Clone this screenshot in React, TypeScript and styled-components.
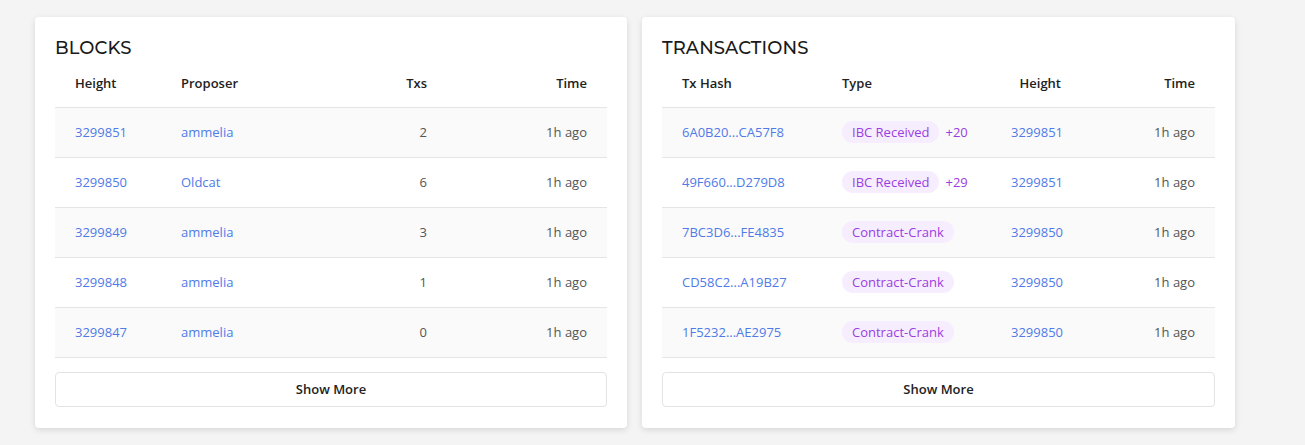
import React from 'react';
import styled, { createGlobalStyle } from 'styled-components';

const GlobalStyle = createGlobalStyle`
  body {
    margin: 0;
    background: #f4f4f4;
    font-family: 'Open Sans', 'Noto Sans', sans-serif;
    color: #222;
  }
`;

const Page = styled.div`
  display: flex;
  gap: 15px;
  padding: 17px 35px;
  align-items: flex-start;
`;

const Card = styled.section<{ $w: number }>`
  width: ${(p) => p.$w}px;
  box-sizing: border-box;
  background: #fff;
  border-radius: 4px;
  box-shadow: 0 2px 6px rgba(0, 0, 0, 0.12);
  padding: 20px 20px 21px;
`;

const Title = styled.h2`
  margin: 0;
  font-family: 'Montserrat', 'Lato', 'Noto Sans', sans-serif;
  font-weight: 500;
  font-size: 18px;
  line-height: 22px;
  letter-spacing: 0.1px;
  color: #1a1a1a;
`;

const Table = styled.table`
  width: 100%;
  border-collapse: collapse;
  table-layout: fixed;
  font-size: 13px;
`;

const Th = styled.th<{ $align?: 'left' | 'right'; $w: number }>`
  width: ${(p) => p.$w}px;
  height: 48px;
  padding: 0 20px;
  text-align: ${(p) => p.$align ?? 'left'};
  font-weight: 600;
  color: #222;
  border-bottom: 1px solid #e5e5e5;
  box-sizing: border-box;
`;

const Tr = styled.tr`
  &:nth-child(odd) {
    background: #fafafa;
  }
`;

const Td = styled.td<{ $align?: 'left' | 'right' }>`
  height: 49px;
  padding: 0 20px;
  text-align: ${(p) => p.$align ?? 'left'};
  color: #555;
  border-bottom: 1px solid #e5e5e5;
  white-space: nowrap;
`;

const Link = styled.a`
  color: #4f7ae8;
  text-decoration: none;
`;

const Badge = styled.span`
  display: inline-block;
  padding: 2px 10px;
  line-height: 18px;
  border-radius: 11px;
  background: #f6eeff;
  color: #9b3ddf;
`;

const Extra = styled.span`
  margin-left: 6px;
  color: #9b3ddf;
`;

const ShowMore = styled.button`
  display: block;
  width: 100%;
  height: 35px;
  margin-top: 14px;
  background: #fff;
  border: 1px solid #e3e3e3;
  border-radius: 4px;
  font-family: inherit;
  font-size: 13px;
  font-weight: 600;
  color: #222;
  cursor: pointer;
`;

const blocks = [
  { height: '3299851', proposer: 'ammelia', txs: 2 },
  { height: '3299850', proposer: 'Oldcat', txs: 6 },
  { height: '3299849', proposer: 'ammelia', txs: 3 },
  { height: '3299848', proposer: 'ammelia', txs: 1 },
  { height: '3299847', proposer: 'ammelia', txs: 0 },
];

const txs = [
  { hash: '6A0B20...CA57F8', type: 'IBC Received', extra: '+20', height: '3299851' },
  { hash: '49F660...D279D8', type: 'IBC Received', extra: '+29', height: '3299851' },
  { hash: '7BC3D6...FE4835', type: 'Contract-Crank', height: '3299850' },
  { hash: 'CD58C2...A19B27', type: 'Contract-Crank', height: '3299850' },
  { hash: '1F5232...AE2975', type: 'Contract-Crank', height: '3299850' },
];

const BlocksCard = () => (
  <Card $w={592}>
    <Title>BLOCKS</Title>
    <Table>
      <thead>
        <tr>
          <Th $w={106}>Height</Th>
          <Th $w={166}>Proposer</Th>
          <Th $w={120} $align="right">Txs</Th>
          <Th $w={160} $align="right">Time</Th>
        </tr>
      </thead>
      <tbody>
        {blocks.map((b) => (
          <Tr key={b.height}>
            <Td><Link href="#">{b.height}</Link></Td>
            <Td><Link href="#">{b.proposer}</Link></Td>
            <Td $align="right">{b.txs}</Td>
            <Td $align="right">1h ago</Td>
          </Tr>
        ))}
      </tbody>
    </Table>
    <ShowMore>Show More</ShowMore>
  </Card>
);

const TransactionsCard = () => (
  <Card $w={593}>
    <Title>TRANSACTIONS</Title>
    <Table>
      <thead>
        <tr>
          <Th $w={160}>Tx Hash</Th>
          <Th $w={169}>Type</Th>
          <Th $w={90} $align="right">Height</Th>
          <Th $w={134} $align="right">Time</Th>
        </tr>
      </thead>
      <tbody>
        {txs.map((t) => (
          <Tr key={t.hash}>
            <Td><Link href="#">{t.hash}</Link></Td>
            <Td>
              <Badge>{t.type}</Badge>
              {t.extra && <Extra>{t.extra}</Extra>}
            </Td>
            <Td $align="right"><Link href="#">{t.height}</Link></Td>
            <Td $align="right">1h ago</Td>
          </Tr>
        ))}
      </tbody>
    </Table>
    <ShowMore>Show More</ShowMore>
  </Card>
);

export default function App() {
  return (
    <>
      <GlobalStyle />
      <Page>
        <BlocksCard />
        <TransactionsCard />
      </Page>
    </>
  );
}
